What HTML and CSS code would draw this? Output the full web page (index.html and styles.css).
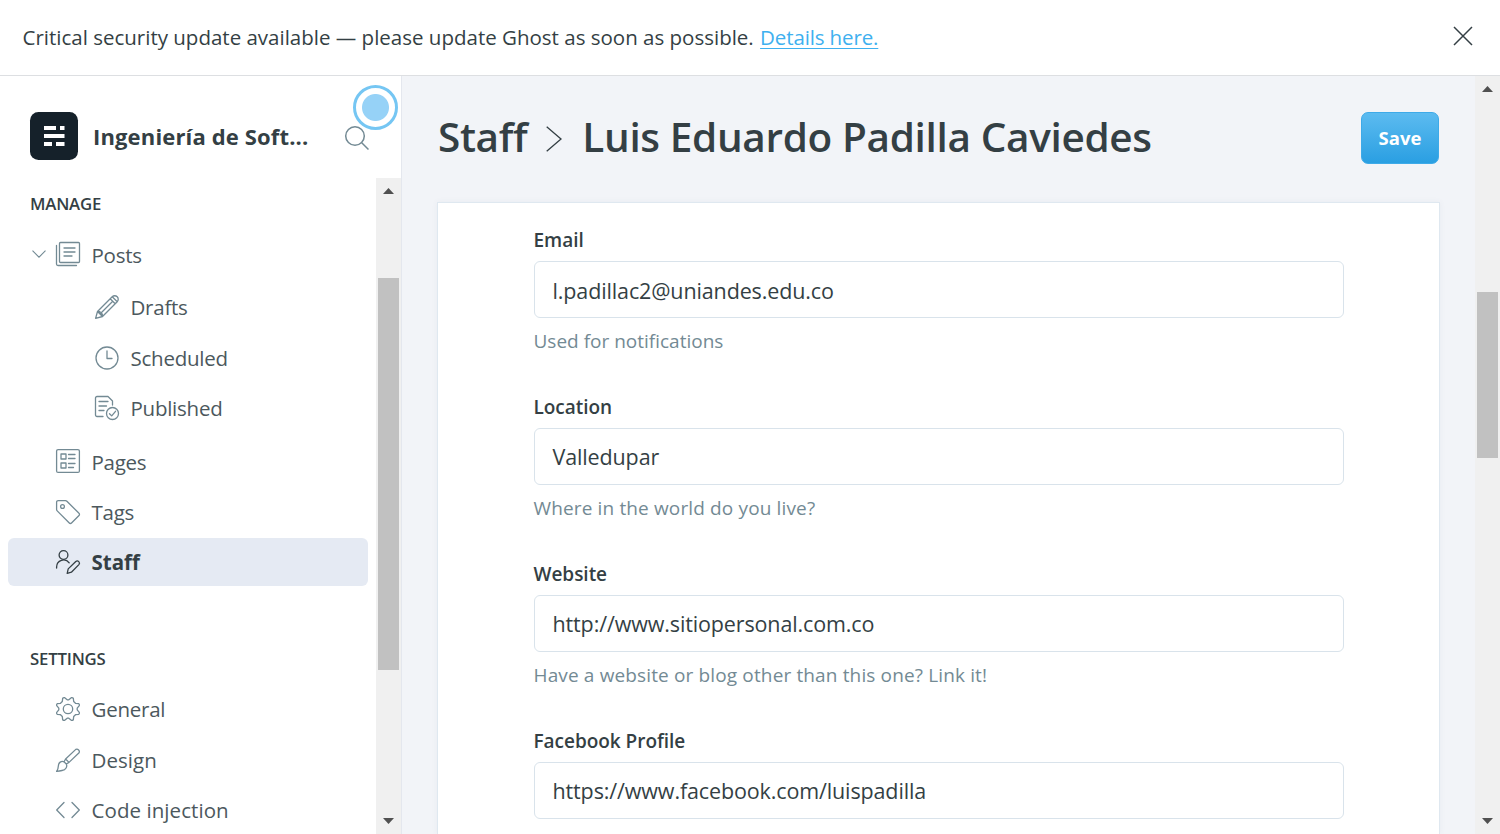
FILE: index.html
```html
<!DOCTYPE html>
<html lang="en">
<head>
<meta charset="utf-8">
<title>Staff - Ghost</title>
<link rel="stylesheet" href="styles.css">
</head>
<body>
<div class="banner">
  <p class="banner-text">Critical security update available — please update Ghost as soon as possible. <a class="banner-link" href="#">Details here.</a></p>
  <svg class="banner-close" viewBox="0 0 20 20"><path d="M1 1L19 19M19 1L1 19"/></svg>
</div>
<div class="app">
  <aside class="sidebar">
    <header class="site">
      <svg class="site-logo" viewBox="0 0 48 48"><rect width="48" height="48" rx="8.500" fill="#15212a"/><path fill="#fff" d="M14 14h12v4H14zM30 14h4.500v4H30zM14 22h20.500v4H14zM14 30h8v4h-8zM26 30h8.500v4H26z"/></svg>
      <span class="site-name">Ingeniería de Soft...</span>
      <svg class="search" viewBox="0 0 24 24"><circle cx="10" cy="10" r="9.300"/><path d="M16.700 16.700L23.500 23.500"/></svg>
      <span class="beacon"></span>
    </header>
    <div class="nav-scroll">
      <nav class="nav">
        <h2 class="nav-title">MANAGE</h2>
        <a class="nav-item nav-posts"><svg class="chevron" viewBox="0 0 14 8"><path d="M.5 .7L7 7.200L13.500 .7"/></svg><svg class="icon" viewBox="0 0 24 24"><rect x="3.500" y=".5" width="20" height="20" rx="1"/><path d="M.5 3.500v18.500a1.500 1.500 0 0 0 1.500 1.500h18.500M8 6h11M8 10h11M8 14h8"/></svg><span>Posts</span></a>
        <a class="nav-item nav-sub"><svg class="icon" viewBox="0 0 24 24"><path d="M.6 23.400L2.500 16.500L17.200 1.800a3.500 3.500 0 0 1 5 5L7.500 21.500zM2.500 16.500L7.500 21.500M15.200 3.800l5 5M17.500 2l4.500 4.500M5 19L17.500 6.500M2.500 16.500L5 16.700V19H7.300V21.500"/></svg><span>Drafts</span></a>
        <a class="nav-item nav-sub"><svg class="icon" viewBox="0 0 24 24"><circle cx="12" cy="12" r="11"/><path d="M12 5v7.500h5"/></svg><span>Scheduled</span></a>
        <a class="nav-item nav-sub"><svg class="icon" viewBox="0 0 24 24"><path d="M8 20.500H2A1.500 1.500 0 0 1 .5 19V2A1.500 1.500 0 0 1 2 .5h11L17.500 5v4M4 5.500h9M4 10h7.500M4 14.500h5"/><circle cx="17.500" cy="17.500" r="6"/><path d="M14.500 17.700l2.200 2.200 3.800-4.600"/></svg><span>Published</span></a>
        <a class="nav-item nav-pages"><svg class="icon" viewBox="0 0 24 24"><rect x=".6" y=".6" width="22.800" height="22.800" rx="1.500"/><path d="M5 5h5v5H5zM5 14h5v5H5zM12.500 5.500h6.500M12.500 9.500h6.500M12.500 14.500h6.500M12.500 18.500h5"/></svg><span>Pages</span></a>
        <a class="nav-item"><svg class="icon" viewBox="0 0 24 24"><path d="M.6 2.200A1.600 1.600 0 0 1 2.200.6h7.300a2 2 0 0 1 1.400.6L23 13.300a1.500 1.500 0 0 1 0 2.200L15.500 23a1.500 1.500 0 0 1-2.200 0L1.200 10.900A2 2 0 0 1 .6 9.500z"/><circle cx="6.500" cy="6.500" r="1.900"/></svg><span>Tags</span></a>
        <a class="nav-item nav-active"><svg class="icon" viewBox="0 0 24 24"><circle cx="7.500" cy="5" r="4.400"/><path d="M.6 18v-1a7 7 0 0 1 12.600-4.200M11.200 23.300l1-4.400 7.600-7.400a2.200 2.200 0 0 1 3.100 3.100l-7.500 7.600z"/></svg><span>Staff</span></a>
        <h2 class="nav-title nav-title-settings">SETTINGS</h2>
        <a class="nav-item"><svg class="icon" viewBox="0 0 24 24"><path d="M11.200 2.800L12.800 2.800L15.300.7Q16.500.3 17.300 1.200L17.700 4.500L19.500 6.300L22.800 6.700Q23.700 7.500 23.300 8.700L21.200 11.200V12.800L23.300 15.300Q23.700 16.500 22.800 17.300L19.500 17.700L17.700 19.500L17.300 22.800Q16.500 23.700 15.300 23.300L12.800 21.200H11.200L8.700 23.300Q7.500 23.700 6.700 22.800L6.300 19.500L4.500 17.700L1.200 17.300Q.3 16.500.7 15.300L2.800 12.800V11.200L.7 8.700Q.3 7.500 1.200 6.700L4.500 6.300L6.300 4.500L6.700 1.200Q7.500.3 8.700.7z"/><circle cx="12" cy="12" r="4.700"/></svg><span>General</span></a>
        <a class="nav-item nav-wide"><svg class="icon" viewBox="0 0 24 24"><path d="M.6 23.400Q2.300 21 2.300 18.300C2.300 14.500 5.500 12.500 8 13.800L10.300 16C11.500 18.500 10 22 6 22.500Q3.500 23 .6 23.400zM8 13.800L9.600 11L13 14.400L10.300 16M9.600 11L19.800 1.400a2.500 2.500 0 0 1 3.300 3.300L13 14.400"/></svg><span>Design</span></a>
        <a class="nav-item nav-wide nav-last"><svg class="icon" viewBox="0 0 24 24"><path d="M8 4.500L.7 12L8 19.500M16 4.500L23.300 12L16 19.500"/></svg><span>Code injection</span></a>
      </nav>
      <div class="scrollbar"><i class="arrow-up"></i><i class="thumb thumb-side"></i><i class="arrow-down"></i></div>
    </div>
  </aside>
  <main class="main">
    <div class="content">
      <header class="page-head">
        <h1 class="crumbs"><span>Staff</span><svg class="crumb-sep" viewBox="0 0 16 26"><path d="M.7 .7L15 13L.7 25.300"/></svg><span>Luis Eduardo Padilla Caviedes</span></h1>
        <button class="save">Save</button>
      </header>
      <section class="card">
        <div class="field"><label class="label">Email</label><div class="input input-email">l.padillac2@uniandes.edu.co</div><p class="help help-short">Used for notifications</p></div>
        <div class="field"><label class="label">Location</label><div class="input">Valledupar</div><p class="help">Where in the world do you live?</p></div>
        <div class="field"><label class="label">Website</label><div class="input">http://www.sitiopersonal.com.co</div><p class="help">Have a website or blog other than this one? Link it!</p></div>
        <div class="field field-last"><label class="label">Facebook Profile</label><div class="input">https://www.facebook.com/luispadilla</div></div>
      </section>
    </div>
    <div class="scrollbar scrollbar-main"><i class="arrow-up"></i><i class="thumb thumb-main"></i><i class="arrow-down"></i></div>
  </main>
</div>
</body>
</html>
```
FILE: styles.css
```css
* { box-sizing: border-box; }
body { margin: 0; width: 1500px; height: 834px; overflow: hidden; display: flex; flex-direction: column; background: #fff; color: #343f44; font-family: "Open Sans", "Noto Sans", sans-serif; white-space: nowrap; }
h1, h2, p { margin: 0; font-weight: 400; }
svg { display: block; flex: none; fill: none; overflow: visible; }
.banner { height: 76px; flex: none; display: flex; align-items: center; justify-content: space-between; padding: 0 27px 0 22.500px; border-bottom: 1px solid #dddfe2; }
.banner-text { margin-top: -2px; font-size: 20.500px; line-height: 30px; }
.banner-link { margin-left: 1px; color: #3eb0ef; letter-spacing: -.13px; text-decoration: underline; text-underline-offset: 3px; text-decoration-thickness: 1px; }
.banner-close { width: 20px; height: 20px; margin-top: -3px; stroke: #343f44; stroke-width: 1.500; }
.app { flex: 1; min-height: 0; display: flex; }
.sidebar { width: 402px; flex: none; display: flex; flex-direction: column; border-right: 1px solid #e4e7ee; }
.site { position: relative; height: 102px; flex: none; display: flex; align-items: center; padding: 18px 32px 0 30px; }
.site-logo { width: 48px; height: 48px; }
.site-name { flex: 1; margin-left: 15px; font-size: 22px; font-weight: 700; letter-spacing: .15px; }
.search { width: 24px; height: 24px; margin-top: 4px; stroke: #738a94; stroke-width: 1.500; }
.beacon { position: absolute; left: 353px; top: 9px; width: 45px; height: 45px; border: 3px solid #75c6f3; border-radius: 50%; background: radial-gradient(circle, #96d2f7 13px, #fff 14px); }
.nav-scroll { flex: 1; min-height: 0; display: flex; justify-content: space-between; overflow: hidden; }
.nav { width: 376px; padding: 10px 8px 0; }
.nav-title { height: 32px; padding-left: 22px; font-size: 16.800px; line-height: 32px; font-weight: 600; letter-spacing: -.2px; }
.nav-item { display: flex; align-items: center; height: 48px; margin-bottom: 2.500px; padding-left: 48px; gap: 11.500px; border-radius: 6px; font-size: 20.500px; letter-spacing: -.25px; color: #4c585d; }
.nav-wide { letter-spacing: .07px; }
.nav-last { height: 47px; margin-bottom: 0; }
.nav-posts { margin-top: 10px; margin-bottom: 5px; padding-left: 24px; }
.nav-posts span, .nav-pages span { padding-top: 2px; }
.chevron { width: 14px; height: 8px; margin-right: -1.500px; stroke: #738a94; stroke-width: 1.100; }
.icon { width: 24px; height: 24px; stroke: #738a94; stroke-width: 1.300; stroke-linejoin: round; stroke-linecap: round; }
.nav-sub { padding-left: 87px; }
.nav-pages { margin-top: 5px; }
.nav-active { background: #e5eaf3; color: #343f44; font-weight: 700; letter-spacing: 0; }
.nav-active .icon { stroke: #343f44; }
.nav-title-settings { margin-top: 57px; margin-bottom: 10px; }
.scrollbar { width: 25px; flex: none; display: flex; flex-direction: column; align-items: center; background: #f0f0f0; }
.arrow-up, .arrow-down { width: 11px; height: 6px; background: #505050; }
.arrow-up { margin-top: 10px; clip-path: polygon(50% 0, 100% 100%, 0 100%); }
.arrow-down { margin-top: auto; margin-bottom: 10px; clip-path: polygon(0 0, 100% 0, 50% 100%); }
.thumb { width: 21px; background: #c1c1c1; }
.thumb-side { height: 392px; margin-top: 84px; }
.thumb-main { height: 166px; margin-top: 200px; }
.main { flex: 1; min-width: 0; display: flex; background: #f2f4f8; }
.content { flex: 1; display: flex; flex-direction: column; padding: 0 35px; }
.page-head { height: 126px; flex: none; display: flex; align-items: center; justify-content: space-between; padding: 0 1px 2px; }
.crumbs { display: flex; align-items: center; margin-top: -4px; font-size: 40.500px; font-weight: 600; letter-spacing: -.35px; }
.crumb-sep { width: 16px; height: 26px; margin: 6px 20px 0 19px; stroke: #343f44; stroke-width: 1.300; }
.save { width: 78px; height: 52px; padding: 0 0 2px; border: 1px solid #3eaae8; border-radius: 7px; background: linear-gradient(#5cbbf0, #2a9fe2); color: #fff; font: 700 18.500px "Open Sans", sans-serif; }
.card { flex: 1; min-height: 0; padding: 20px 95px 0 95.500px; border: 1px solid #dfe8f0; border-bottom: 0; background: #fff; box-shadow: 0 0 6px rgba(60,80,120,.06); }
.field { height: 167px; }
.field-last { height: auto; }
.label { display: block; height: 38px; font-size: 19px; line-height: 34px; font-weight: 600; letter-spacing: -.03px; }
.input { height: 57px; padding-left: 18px; border: 1px solid #d9e3eb; border-radius: 6px; font-size: 21.500px; line-height: 56px; letter-spacing: -.13px; }
.input-email { line-height: 58px; }
.help { height: 46px; font-size: 19px; line-height: 46px; letter-spacing: .14px; color: #738a94; }
.help-short { letter-spacing: 0; }
```
